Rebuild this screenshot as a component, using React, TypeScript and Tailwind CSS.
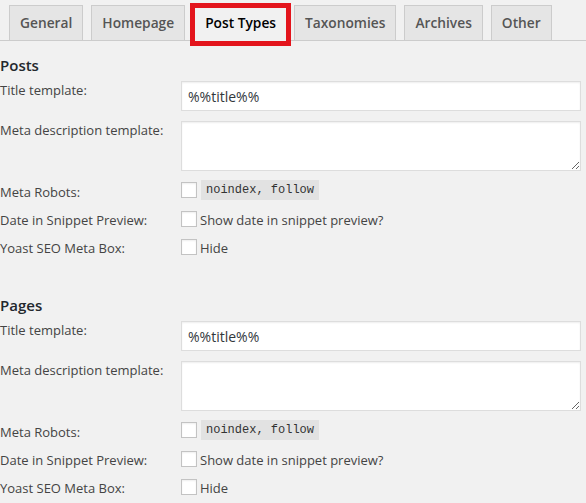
import React from "react";

const tabs = ["General", "Homepage", "Post Types", "Taxonomies", "Archives", "Other"];

function Checkbox() {
  return (
    <input
      type="checkbox"
      className="block appearance-none m-0 w-4 h-4 shrink-0 border border-[#c3c3c3] bg-white shadow-[inset_0_1px_2px_rgba(0,0,0,0.07)]"
    />
  );
}

function Section({ title, className = "" }: { title: string; className?: string }) {
  return (
    <div className={className}>
      <h3 className="text-[15px] leading-[20px] font-semibold text-[#23282d]">{title}</h3>
      <div className="mt-[6px] flex items-start">
        <label className="w-[181px] shrink-0 leading-[18px]">Title template:</label>
        <input
          type="text"
          defaultValue="%%title%%"
          className="block flex-1 min-w-0 h-[30px] border border-[#ddd] bg-white px-[6px] text-[14px] text-[#32373c] shadow-[inset_0_1px_2px_rgba(0,0,0,0.07)] outline-none"
        />
      </div>
      <div className="mt-[10px] flex items-start">
        <label className="w-[181px] shrink-0 leading-[18px]">Meta description template:</label>
        <textarea className="block flex-1 min-w-0 h-[50px] border border-[#ddd] bg-white shadow-[inset_0_1px_2px_rgba(0,0,0,0.07)] outline-none" />
      </div>
      <div className="mt-[9px] flex items-start h-[20px]">
        <label className="w-[181px] shrink-0 pt-[3px] leading-[18px]">Meta Robots:</label>
        <div className="mt-[2px] mr-[4px]">
          <Checkbox />
        </div>
        <code className="h-[20px] px-[5px] bg-[#e2e2e2] font-['Liberation_Mono',monospace] text-[12px] leading-[20px] text-[#333]">
          noindex, follow
        </code>
      </div>
      <div className="mt-[11px] flex items-start h-[18px]">
        <label className="w-[181px] shrink-0 leading-[18px]">Date in Snippet Preview:</label>
        <div className="mr-[3px]">
          <Checkbox />
        </div>
        <span className="leading-[18px]">Show date in snippet preview?</span>
      </div>
      <div className="mt-[10px] flex items-start h-[18px]">
        <label className="w-[181px] shrink-0 leading-[18px]">Yoast SEO Meta Box:</label>
        <div className="mr-[3px]">
          <Checkbox />
        </div>
        <span className="leading-[18px]">Hide</span>
      </div>
    </div>
  );
}

export default function App() {
  return (
    <div className="min-h-screen w-[586px] bg-[#f1f1f1] font-['Open_Sans',sans-serif] text-[13px] text-[#444] overflow-hidden">
      <div className="flex items-start gap-[8px] pl-[9px] pt-[5px] border-b border-[#ccc]">
        {tabs.map((t) =>
          t === "Post Types" ? (
            <div
              key={t}
              className="relative z-10 -mt-[2px] -mb-[8px] h-[43px] border-[5px] border-[#e3141c] bg-[#f1f1f1] px-[10px] pt-[3px] text-[13.75px] leading-[24px] font-semibold text-[#000] -ml-[3px] -mr-[5px]"
            >
              {t}
            </div>
          ) : (
            <div
              key={t}
              className="-mb-px h-[36px] border border-[#ccc] bg-[#e5e5e5] px-[10px] py-[5px] text-[13.75px] leading-[24px] font-semibold text-[#555]"
            >
              {t}
            </div>
          )
        )}
      </div>
      <div className="pr-[5px] pt-[14px]">
        <Section title="Posts" />
        <Section title="Pages" className="mt-[38px]" />
      </div>
    </div>
  );
}
